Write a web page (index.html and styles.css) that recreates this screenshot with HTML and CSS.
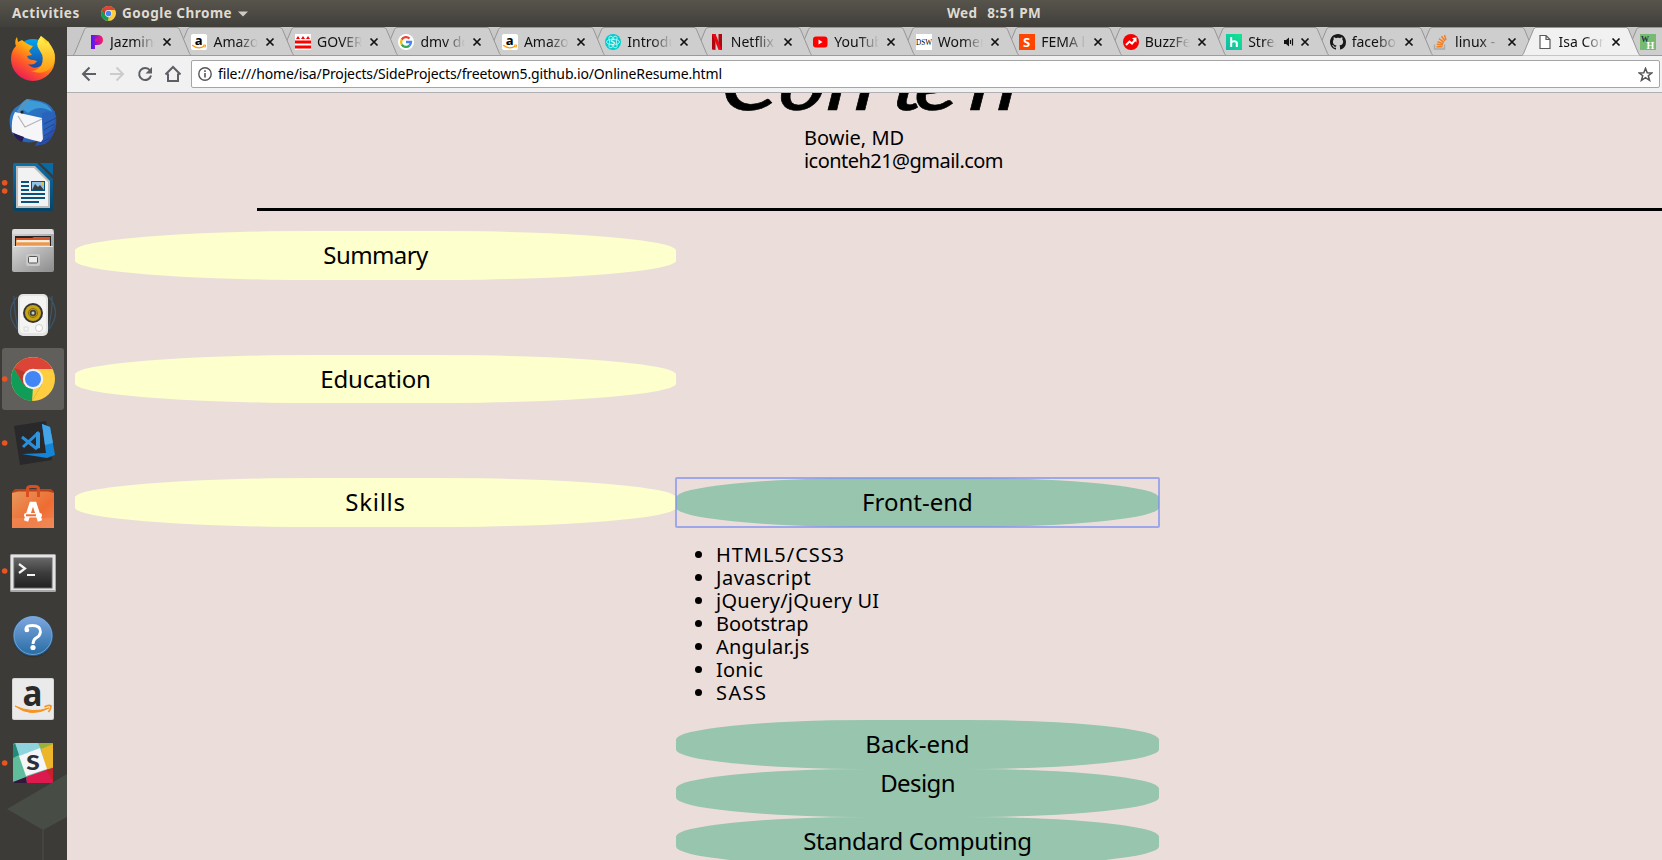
FILE: index.html
```html
<!DOCTYPE html>
<html lang="en">
<head>
<meta charset="utf-8">
<title>Isa Conteh</title>
<link rel="stylesheet" href="styles.css">
</head>
<body>
<svg class="defs" width="0" height="0" aria-hidden="true">
  <defs>
    <linearGradient id="ff" x1="0.8" y1="0" x2="0.2" y2="1"><stop offset="0" stop-color="#ffe226"/><stop offset=".35" stop-color="#ffb010"/><stop offset=".65" stop-color="#ff5a28"/><stop offset="1" stop-color="#e8135e"/></linearGradient>
    <linearGradient id="ffy" x1="0" y1="0" x2="0" y2="1"><stop offset="0" stop-color="#fff44f"/><stop offset="1" stop-color="#ff9810"/></linearGradient>
    <linearGradient id="ffb" x1="0" y1="0" x2="0" y2="1"><stop offset="0" stop-color="#00a5f0"/><stop offset="1" stop-color="#282a86"/></linearGradient>
    <linearGradient id="tb" x1="0" y1="0" x2="1" y2="1"><stop offset="0" stop-color="#2f7fc8"/><stop offset=".5" stop-color="#2a6fc0"/><stop offset="1" stop-color="#2b3fa0"/></linearGradient>
    <linearGradient id="metal" x1="0" y1="0" x2="1" y2="1"><stop offset="0" stop-color="#d5d5d5"/><stop offset="1" stop-color="#8e8e8e"/></linearGradient>
    <linearGradient id="wr" x1="0" y1="0" x2="0" y2="1"><stop offset="0" stop-color="#0a70ad"/><stop offset="1" stop-color="#064468"/></linearGradient>
    <linearGradient id="bag" x1="0" y1="0" x2="1" y2="1"><stop offset="0" stop-color="#e8985c"/><stop offset=".6" stop-color="#ee6c32"/><stop offset="1" stop-color="#f28552"/></linearGradient>
    <linearGradient id="term" x1="0" y1="0" x2="0" y2="1"><stop offset="0" stop-color="#666"/><stop offset=".5" stop-color="#3c3c3c"/><stop offset="1" stop-color="#222"/></linearGradient>
    <linearGradient id="help" x1="0" y1="0" x2="0" y2="1"><stop offset="0" stop-color="#7ea6de"/><stop offset="1" stop-color="#2a6da5"/></linearGradient>
    <linearGradient id="pan" x1="0" y1="0" x2="1" y2="0"><stop offset="0" stop-color="#3a20ff"/><stop offset=".5" stop-color="#b010c0"/><stop offset="1" stop-color="#ff2050"/></linearGradient>
    <linearGradient id="hulu" x1="0" y1="1" x2="1" y2="0"><stop offset="0" stop-color="#10b8a8"/><stop offset="1" stop-color="#10e890"/></linearGradient>
    <symbol id="chrome" viewBox="0 0 44 44">
      <circle cx="22" cy="22" r="22" fill="#ffcd40"/>
      <path d="M22 22 3 11A22 22 0 0 1 41.500 12L22 12Z" fill="#db4437"/>
      <path d="M3 11A22 22 0 0 0 21 44L31 27 22 22 13 27Z" fill="#0f9d58"/>
      <path d="M3 11 13 28 22 22 22 12Z" fill="#db4437"/><path d="M3 11 12.500 27 Q11 20 14 15Z" fill="#b83a2e"/>
      <path d="M21 44 31 27 22 30Z" fill="#ffcd40"/>
      <circle cx="22" cy="22" r="10.200" fill="#f1f1f1"/><circle cx="22" cy="22" r="8" fill="#4285f4"/>
    </symbol>
    <symbol id="amz" viewBox="0 0 16 16"><rect width="16" height="16" rx="2" fill="#fff"/><text x="3.700" y="10.500" class="amz-a">a</text><path d="M1.200 11.300Q7.500 16 13.500 12" fill="none" stroke="#f90" stroke-width="1.400"/><path d="M12 11.200 14.700 11 14 13.600" fill="none" stroke="#f90"/></symbol>
    <symbol id="shape" viewBox="0 0 118 29"><path d="M0 28.500 1.500 26.500 11.500 2.500Q12.300 .5 14 .5H104Q105.700 .5 106.500 2.500L116.500 26.500 118 28.500" stroke="#969696" stroke-width="1"/></symbol>
    <symbol id="x" viewBox="0 0 10 10"><path d="M1.500 1.500 8.500 8.500M8.500 1.500 1.500 8.500" stroke="currentColor" stroke-width="1.700"/></symbol>
  </defs>
</svg>

<div class="desktop">
  <header class="topbar">
    <span class="activities">Activities</span>
    <svg class="top-chrome" width="15" height="15"><use href="#chrome"/></svg>
    <span class="app-name">Google Chrome</span>
    <svg class="top-arrow" width="10" height="6"><path d="M0 .5H10L5 5.500Z" fill="#cfccc4"/></svg>
    <span class="clock"><span class="day">Wed</span><span class="time">8:51 PM</span></span>
  </header>

  <div class="workspace">
    <nav class="dock">
      <svg class="app" viewBox="0 0 66 64">
        <circle cx="33" cy="31" r="19" fill="url(#ffb)"/>
        <path d="M17 10 18 15 22 13Q28 18 33 19L29 24 32 28 27 29Q28 33 33 33L37 34Q34 39 28 37Q34 44 42 38Q46 31 42 24Q36 16 41 9Q55 18 55 32A22 22 0 0 1 11 32Q11 24 16 19Q14 14 17 10Z" fill="url(#ff)"/>
        <path d="M41 9Q34 17 40 24Q45 31 41 39Q37 44 31 44Q45 49 52 39Q58 27 51 20L48 14 46 17Z" fill="url(#ffy)"/>
      </svg>
      <svg class="app" viewBox="0 0 66 64">
        <path d="M22 12Q26 6 34 9Q52 10 56 25Q58 38 50 49L45 53 35 55 38 50Q20 55 12 42Q6 26 15 17Z" fill="url(#tb)"/>
        <path d="M20 16Q24 8 34 10Q48 11 53 22Q40 12 28 22Z" fill="#3d9bd8"/>
        <path d="M22 12 27 8 30 9Q24 13 21 24L17 20Z" fill="#5794bd"/>
        <path d="M15 21 42 27 43 48 41 51Q22 47 12 41Q11 28 15 21Z" fill="#f6f6f8"/><path d="M18 25 25 36 42 28" fill="none" stroke="#b4b4b8" stroke-width="1.200"/>
        <path d="M13 42 24 46 22 51Q15 48 13 42Z" fill="#261a58"/><path d="M42 22 55 20 54 33 48 43 43 48Z" fill="#2a63bb"/>
        <path d="M44 33 56 27M44 39 54 33M44 45 54 39M39 53 50 47" stroke="#24448f" stroke-width="1"/><circle cx="22" cy="21" r="1.600" fill="#222"/>
      </svg>
      <svg class="app" viewBox="0 0 66 64">
        <circle cx="4.700" cy="27.700" r="2.800" fill="#e95420"/><circle cx="4.700" cy="36" r="2.800" fill="#e95420"/>
        <path d="M15 8H37L53 24V54Q53 56 51 56H15Q13 56 13 54V10Q13 8 15 8Z" fill="url(#wr)"/><path d="M40 8H53V20Z" fill="#0a68a3"/>
        <path d="M16 11H35L50 26V53H16Z" fill="#bcbcbc"/><path d="M18 13H34L48 27V51H18Z" fill="#f2f2f2"/>
        <path d="M21 27H29M21 31H29M21 35H29M21 39H45M21 43H45M21 47H39" stroke="#0a527d" stroke-width="2"/>
        <rect x="31" y="26" width="14" height="10" fill="#0a527d"/><rect x="32" y="27" width="12" height="8" fill="#8fc4e8"/><path d="M32 35 35 29 38 32 40 30 44 35Z" fill="#3c3c3c"/><circle cx="42.500" cy="28.500" r="1.500" fill="#e8c040"/>
      </svg>
      <svg class="app" viewBox="0 0 66 64">
        <rect x="12" y="10" width="42" height="43" rx="2" fill="url(#metal)"/><path d="M14 10H52L54 15H12Z" fill="#dedede"/>
        <rect x="15" y="17" width="36" height="11" fill="#252525"/><path d="M16 19H32L34 18H50V27H16Z" fill="#d5542a"/><path d="M16 21H50V28H16Z" fill="#f0b070"/><path d="M17 22H49" stroke="#fff" stroke-width="1.500"/><path d="M16 25H50" stroke="#e08038"/>
        <rect x="13" y="27" width="40" height="25" rx="1" fill="url(#metal)"/><rect x="13" y="27" width="40" height="1" fill="#e8e8e8"/>
        <rect x="26" y="35" width="14" height="12" rx="2" fill="#c8c8c8"/><rect x="28.500" y="37.500" width="9" height="6.500" rx="1" fill="#ececec" stroke="#555"/>
      </svg>
      <svg class="app" viewBox="0 0 66 64">
        <g fill="none" stroke="#3e5569" stroke-width="1.300"><path d="M17 14Q4 29 17 46M14 13Q14 29 19 50M49 14Q62 29 49 46M52 13Q53 29 47 50"/></g>
        <rect x="18" y="11" width="30" height="42" rx="5" fill="#e4e4e2"/><rect x="20" y="13" width="26" height="37" rx="4" fill="#f4f4f2"/>
        <circle cx="33" cy="30" r="10" fill="#353535"/><circle cx="33" cy="30" r="8" fill="#c8a414"/><circle cx="33" cy="30" r="4.500" fill="none" stroke="#8a7008" stroke-width="1"/><circle cx="33" cy="30" r="3.300" fill="#444"/><circle cx="33" cy="30" r="1.500" fill="#ccc"/>
        <circle cx="39" cy="45" r="3.500" fill="#fff" stroke="#ccc"/><rect x="24" y="44" width="4" height="4" fill="none" stroke="#dcdcdc"/>
      </svg>
      <svg class="app" viewBox="0 0 66 64">
        <rect x="2" y="1" width="62" height="62" rx="3" fill="#605f5b"/><circle cx="4.700" cy="32" r="2.800" fill="#e95420"/>
        <use href="#chrome" x="11" y="10" width="44" height="44"/>
      </svg>
      <svg class="app" viewBox="0 0 66 64">
        <circle cx="4.700" cy="32" r="2.800" fill="#e95420"/>
        <path d="M14 15 46 10 52 49 20 54Z" fill="#29292b"/><path d="M42 13 50 16 55 44 47 47 22 43 46 42Z" fill="#1384d6"/><path d="M42 13 50 16 53 32 45 34Z" fill="#43a5e8"/>
        <path d="M22 26 37 38M39 21 23 36" fill="none" stroke="#2b8fd8" stroke-width="3"/><path d="M36 21 40 22V37L36 38Z" fill="#3095df"/>
      </svg>
      <svg class="app" viewBox="0 0 66 64">
        <path d="M12 17 15 14H51L54 17V21H12Z" fill="#b8431a"/><path d="M12 18 18 16.500H48L54 18V53H12Z" fill="url(#bag)"/><path d="M12 43H54V53H12Z" fill="#f18a58" opacity=".6"/>
        <path d="M27.500 22V14Q27.500 11.500 31 11.500H35Q38.500 11.500 38.500 14V22" fill="none" stroke="#d94f22" stroke-width="3"/>
        <path d="M26 46 31.500 29H34.500L40 46" fill="none" stroke="#fff" stroke-width="4.500"/><rect x="24" y="38" width="18" height="4.500" rx="2" fill="#fff"/><rect x="26" y="39.300" width="10" height="2" fill="#ee6c32"/>
      </svg>
      <svg class="app" viewBox="0 0 66 64">
        <circle cx="4.700" cy="32" r="2.800" fill="#e95420"/>
        <rect x="10" y="15" width="46" height="38" rx="1.500" fill="#a8a8a8"/><rect x="11" y="16" width="44" height="35" fill="#e4e4e4"/><rect x="13.500" y="18.500" width="39" height="31" fill="#686868"/><rect x="14.500" y="19.500" width="37" height="29" fill="url(#term)"/>
        <path d="M19 25 25 29.500 19 34M27 36H35" fill="none" stroke="#f4f4f4" stroke-width="2.200"/>
      </svg>
      <svg class="app" viewBox="0 0 66 64">
        <circle cx="33" cy="35" r="19.500" fill="#33322e"/><circle cx="33" cy="33" r="20" fill="#265f92"/><circle cx="33" cy="32.500" r="19" fill="url(#help)" stroke="#7fb0e0" stroke-width=".8"/>
        <path d="M26.500 28.500Q24 22.500 32.500 22.500Q40.500 22.500 40.500 29Q40 33 36 35Q33 37 33 41" fill="none" stroke="#fff" stroke-width="2.800"/><circle cx="27" cy="27" r="2.300" fill="#fff"/><circle cx="33" cy="44.500" r="2.600" fill="#fff"/>
      </svg>
      <svg class="app" viewBox="0 0 66 64">
        <rect x="12" y="11" width="42" height="42" rx="2" fill="#d5d5d5"/><rect x="13" y="12" width="40" height="40" rx="1" fill="#eaeaea"/>
        <text x="22.500" y="39" class="dock-a" textLength="20" lengthAdjust="spacingAndGlyphs">a</text><path d="M15 39Q31 51 49 41Q32 47 15 39Z" fill="#f7931e" stroke="#f7931e"/><path d="M44.500 40Q49 37.500 51 39Q51 42 48.500 45" fill="none" stroke="#f7931e" stroke-width="1.800"/>
      </svg>
      <svg class="app" viewBox="0 0 66 64">
        <circle cx="4.700" cy="32" r="2.800" fill="#e95420"/>
        <rect x="13" y="12" width="40" height="40" rx="2" fill="#5fbd9b"/><path d="M15 12H39L41 18 19 25Z" fill="#8fd3dd"/><path d="M13 14 15 12 19 24 13 27Z" fill="#228b78"/><path d="M38 12H53V14L41 18Z" fill="#98b03c"/><path d="M41 18 53 13V36L46 39Z" fill="#ecb52a"/><path d="M26 46 46 39 53 37V52H27Z" fill="#dc1a4e"/><path d="M46 39 53 37V50Z" fill="#c8202a"/><path d="M13 51 26 46 27 52H14Z" fill="#35153a"/><path d="M19 25 40 17 47 38 26 45Z" fill="#f4f6f9"/>
        <text x="26" y="38.500" class="dock-s" textLength="14" lengthAdjust="spacingAndGlyphs">s</text>
      </svg>
      <svg class="dock-tail" viewBox="0 0 67 86" width="67" height="86"><path d="M7 35 67 0V43L43 56Z" fill="#474c44"/><path d="M43 56V86" stroke="#43463f" stroke-width="2"/></svg>
    </nav>

    <main class="browser">
      <div class="tabs">
        <div class="tab"><svg class="shape"><use href="#shape"/></svg><svg class="fav" viewBox="0 0 16 16"><path d="M3 1H9Q15 1 15 6Q15 11 9 11H7V15H3Z" fill="url(#pan)"/><path d="M7 5 10 4V7L7 8Z" fill="#e01878"/></svg><span class="label">Jazmine</span><svg class="close"><use href="#x"/></svg></div>
        <div class="tab"><svg class="shape"><use href="#shape"/></svg><svg class="fav"><use href="#amz"/></svg><span class="label">Amazon</span><svg class="close"><use href="#x"/></svg></div>
        <div class="tab"><svg class="shape"><use href="#shape"/></svg><svg class="fav" viewBox="0 0 16 16"><rect width="16" height="16" fill="#fff"/><path d="M0 6.500H16V9.500H0ZM0 11.500H16V14.500H0Z" fill="#f00"/><path d="M1 5 3 2 5 5ZM6 5 8 2 10 5ZM11 5 13 2 15 5Z" fill="#f00"/></svg><span class="label">GOVERN</span><svg class="close"><use href="#x"/></svg></div>
        <div class="tab"><svg class="shape"><use href="#shape"/></svg><svg class="fav" viewBox="0 0 16 16"><circle cx="8" cy="8" r="8" fill="#fff"/><g fill="none" stroke-width="2.300"><path d="M11.500 4.500A5 5 0 0 0 3.700 5.600" stroke="#ea4335"/><path d="M3.700 5.600A5 5 0 0 0 3.800 10.600" stroke="#fbbc05"/><path d="M3.800 10.600A5 5 0 0 0 11.400 11.600" stroke="#34a853"/><path d="M8 8H13Q13 10 11.400 11.600" stroke="#4285f4"/></g></svg><span class="label">dmv do</span><svg class="close"><use href="#x"/></svg></div>
        <div class="tab"><svg class="shape"><use href="#shape"/></svg><svg class="fav"><use href="#amz"/></svg><span class="label">Amazon</span><svg class="close"><use href="#x"/></svg></div>
        <div class="tab"><svg class="shape"><use href="#shape"/></svg><svg class="fav" viewBox="0 0 16 16"><circle cx="8" cy="8" r="8" fill="#0cc"/><g fill="none" stroke="#b8ffff" stroke-width=".8"><ellipse cx="8" cy="8" rx="6.500" ry="2.800"/><ellipse cx="8" cy="8" rx="6.500" ry="2.800" transform="rotate(60 8 8)"/><ellipse cx="8" cy="8" rx="6.500" ry="2.800" transform="rotate(120 8 8)"/></g><circle cx="8" cy="8" r="3" fill="#0cc"/><text x="5.600" y="11" class="fav-s">S</text></svg><span class="label">Introdu</span><svg class="close"><use href="#x"/></svg></div>
        <div class="tab"><svg class="shape"><use href="#shape"/></svg><svg class="fav" viewBox="0 0 16 16"><path d="M3 0H6.500V16L3 15.500ZM9.500 0H13V16L9.500 15.500Z" fill="#b1060f"/><path d="M3 0H6.500L13 16 9.500 15.500Z" fill="#e50914"/></svg><span class="label">Netflix</span><svg class="close"><use href="#x"/></svg></div>
        <div class="tab"><svg class="shape"><use href="#shape"/></svg><svg class="fav" viewBox="0 0 16 16"><rect x="1" y="2.500" width="14.500" height="11" rx="3" fill="#f00"/><path d="M6.500 5.500V10.500L10.500 8Z" fill="#fff"/></svg><span class="label">YouTube</span><svg class="close"><use href="#x"/></svg></div>
        <div class="tab"><svg class="shape"><use href="#shape"/></svg><svg class="fav" viewBox="0 0 16 16"><rect width="16" height="16" fill="#fff"/><text x="0" y="10.500" class="fav-dsw" textLength="16" lengthAdjust="spacingAndGlyphs">DSW</text></svg><span class="label">Women</span><svg class="close"><use href="#x"/></svg></div>
        <div class="tab"><svg class="shape"><use href="#shape"/></svg><svg class="fav" viewBox="0 0 16 16"><rect width="16" height="16" fill="#ff4500"/><text x="4" y="13" class="fav-b">S</text></svg><span class="label">FEMA l</span><svg class="close"><use href="#x"/></svg></div>
        <div class="tab"><svg class="shape"><use href="#shape"/></svg><svg class="fav" viewBox="0 0 16 16"><circle cx="8" cy="8" r="8" fill="#f40000"/><path d="M3 11 6.500 7.500 9 9.500 12 6" fill="none" stroke="#fff" stroke-width="2"/><path d="M9 4 13.500 3.500V8.500Z" fill="#fff"/></svg><span class="label">BuzzFe</span><svg class="close"><use href="#x"/></svg></div>
        <div class="tab"><svg class="shape"><use href="#shape"/></svg><svg class="fav" viewBox="0 0 16 16"><rect width="16" height="16" fill="url(#hulu)"/><path d="M5.200 3V13M5.200 8.500Q5.500 7.300 8 7.300Q10.800 7.300 10.800 9V13" fill="none" stroke="#fff" stroke-width="2"/></svg><span class="label short">Strea</span><svg class="sound" viewBox="0 0 10 10"><path d="M0 3H2L5 .5V9.500L2 7H0Z" fill="#111"/><path d="M6.500 3V7M8.500 1.500V8.500" stroke="#111" stroke-width="1.200"/></svg><svg class="close"><use href="#x"/></svg></div>
        <div class="tab"><svg class="shape"><use href="#shape"/></svg><svg class="fav" viewBox="0 0 16 16"><path d="M8 0C3.580 0 0 3.580 0 8c0 3.540 2.290 6.530 5.470 7.590.4.070.55-.17.55-.38 0-.19-.01-.82-.01-1.490-2.010.37-2.530-.49-2.690-.94-.09-.23-.48-.94-.82-1.130-.28-.15-.68-.52-.01-.53.63-.01 1.080.58 1.230.82.72 1.210 1.870.87 2.330.66.07-.52.28-.87.51-1.070-1.780-.2-3.640-.89-3.640-3.950 0-.87.31-1.590.82-2.150-.08-.2-.36-1.020.08-2.120 0 0 .67-.21 2.200.82.64-.18 1.320-.27 2-.27s1.360.09 2 .27c1.530-1.040 2.200-.82 2.200-.82.44 1.100.16 1.920.08 2.120.51.56.82 1.270.82 2.150 0 3.070-1.870 3.750-3.650 3.950.29.25.54.73.54 1.480 0 1.070-.01 1.930-.01 2.200 0 .21.15.46.55.38A8.010 8.010 0 0 0 16 8c0-4.420-3.580-8-8-8z" fill="#191717"/></svg><span class="label">facebook</span><svg class="close"><use href="#x"/></svg></div>
        <div class="tab"><svg class="shape"><use href="#shape"/></svg><svg class="fav" viewBox="0 0 16 16"><path d="M1.500 10.500V15H11.500V10.500" fill="none" stroke="#aaa" stroke-width="1.300"/><path d="M3.500 12.700H9.500M3.700 10.300 9.800 11M4.500 7.800 10.300 9.700M6 4.700 11 8.300M8.500 2.200 12 7M11.500 1 13 6" stroke="#f48024" stroke-width="1.500"/></svg><span class="label">linux - l</span><svg class="close"><use href="#x"/></svg></div>
        <div class="tab active"><svg class="shape"><use href="#shape"/></svg><svg class="fav" viewBox="0 0 16 16"><path d="M3 1.500H9L13 5.500V14.500H3ZM9 1.500V5.500H13" fill="#fff" stroke="#5a5a5a" stroke-width="1.200"/></svg><span class="label">Isa Conteh</span><svg class="close"><use href="#x"/></svg></div>
        <div class="tab"><svg class="shape"><use href="#shape"/></svg><svg class="fav" viewBox="0 0 16 16"><rect width="16" height="16" fill="#77bb72"/><text x="1" y="7.500" class="fav-w">W</text><text x="6.500" y="14.500" class="fav-h">H</text></svg></div>
      </div>

      <div class="toolbar">
        <svg class="nav" viewBox="0 0 16 16"><path d="M15 8H2.500M8.500 1.500 2 8 8.500 14.500" fill="none" stroke="#5c5f64" stroke-width="2"/></svg>
        <svg class="nav" viewBox="0 0 16 16"><path d="M1 8H13.500M7.500 1.500 14 8 7.500 14.500" fill="none" stroke="#ccc" stroke-width="2"/></svg>
        <svg class="nav" viewBox="0 0 16 16"><path d="M13 4.500A6 6 0 1 0 14 9.500" fill="none" stroke="#5c5f64" stroke-width="2"/><path d="M15 1V7.500H8.500Z" fill="#5c5f64"/></svg>
        <svg class="nav home" viewBox="0 0 18 18"><path d="M1.500 9.500 9 2 16.500 9.500M4 8.500V16H14V8.500" fill="none" stroke="#5c5f64" stroke-width="2"/></svg>
        <div class="omnibox">
          <svg class="info" viewBox="0 0 14 14"><circle cx="7" cy="7" r="6.200" fill="none" stroke="#555" stroke-width="1.400"/><path d="M7 6V10.500M7 3.300V4.900" stroke="#555" stroke-width="1.600"/></svg>
          <span class="url">file:///home/isa/Projects/SideProjects/freetown5.github.io/OnlineResume.html</span>
          <svg class="bookmark" viewBox="0 0 14 14"><path d="M7 1.300 8.600 5.300 13 5.500 9.600 8.200 10.800 12.500 7 10 3.200 12.500 4.400 8.200 1 5.500 5.400 5.300Z" fill="none" stroke="#555" stroke-width="1.400"/></svg>
        </div>
      </div>

      <div class="page">
        <svg class="name" width="320" height="22"><text class="name-text" transform="translate(0 16.500) skewX(-6) scale(1.250 1)" x="1 47.500 86 138 156 200">Conteh</text></svg>
        <address class="contact"><span>Bowie, MD</span><span class="email">iconteh21@gmail.com</span></address>
        <hr class="rule">
        <section class="resume">
          <h2 class="pill tight">Summary</h2>
          <h2 class="pill snug">Education</h2>
          <div class="skills">
            <h2 class="pill loose">Skills</h2>
            <div class="groups">
              <h3 class="pill green focus">Front-end</h3>
              <ul class="list">
                <li class="caps">HTML5/CSS3</li><li class="wide">Javascript</li><li>jQuery/jQuery UI</li><li class="even">Bootstrap</li><li>Angular.js</li><li>Ionic</li><li class="widest">SASS</li>
              </ul>
              <h3 class="pill green">Back-end</h3>
              <h3 class="pill green raised tight">Design</h3>
              <h3 class="pill green medium">Standard Computing</h3>
            </div>
          </div>
        </section>
      </div>
    </main>
  </div>
</div>
</body>
</html>
```
FILE: styles.css
```css
* { box-sizing: border-box; }
body { margin: 0; overflow: hidden; font-family: "Noto Sans", "Open Sans", sans-serif; color: #000; }
svg { display: block; flex: none; }
.defs { position: absolute; }
.desktop { display: flex; flex-direction: column; width: 1662px; height: 860px; overflow: hidden; }

.topbar { display: flex; align-items: center; height: 27px; flex: none; padding-left: 12px; background: linear-gradient(#57544c, #403f3a); color: #dfdbd2; font-size: 13.5px; font-weight: 700; letter-spacing: .5px; line-height: 27px; white-space: nowrap; }
.activities { width: 89px; }
.top-chrome { margin-right: 6px; }
.app-name { width: 116px; }
.clock { display: flex; gap: 10px; margin-left: 699px; letter-spacing: .3px; }

.workspace { display: flex; flex: 1; min-height: 0; }
.dock { width: 67px; flex: none; background: #3c3b37; overflow: hidden; }
.app { width: 66px; height: 64px; }
.dock-tail { margin-top: -21px; }
.dock-a { font: 700 35px "Open Sans", sans-serif; fill: #2a2a2a; }
.dock-s { font: 700 28px "Lato", sans-serif; fill: #2b303a; }

.browser { display: flex; flex-direction: column; flex: 1; min-width: 0; background: #f1f1f1; }
.tabs { display: flex; height: 29px; flex: none; padding-left: 6px; overflow: hidden; background: #c9c9c9; box-shadow: inset 0 -1px #9b9b9b; }
.tab { position: relative; display: flex; align-items: center; flex: none; width: 103.47px; height: 29px; padding-left: 15px; color: #111; }
/* Each background tab covers the left edge of the one after it. */
.tab:nth-child(1) { z-index: 16; }
.tab:nth-child(2) { z-index: 15; }
.tab:nth-child(3) { z-index: 14; }
.tab:nth-child(4) { z-index: 13; }
.tab:nth-child(5) { z-index: 12; }
.tab:nth-child(6) { z-index: 11; }
.tab:nth-child(7) { z-index: 10; }
.tab:nth-child(8) { z-index: 9; }
.tab:nth-child(9) { z-index: 8; }
.tab:nth-child(10) { z-index: 7; }
.tab:nth-child(11) { z-index: 6; }
.tab:nth-child(12) { z-index: 5; }
.tab:nth-child(13) { z-index: 4; }
.tab:nth-child(14) { z-index: 3; }
.tab.active { z-index: 30; }
.shape { position: absolute; left: 0; top: 0; width: 118px; height: 29px; fill: #cecece; }
.tab:not(.active)::after { content: ""; position: absolute; left: 0; bottom: 0; width: 118px; height: 1px; background: #9b9b9b; }
.active .shape { fill: #f1f1f1; }
.fav { position: relative; width: 16px; height: 16px; margin-right: 6px; z-index: 1; }
.label { position: relative; width: 45px; overflow: hidden; white-space: nowrap; font-size: 14px; line-height: 28px; -webkit-mask-image: linear-gradient(90deg, #000 55%, transparent); mask-image: linear-gradient(90deg, #000 55%, transparent); }
.label.short { width: 28px; margin-right: 8px; }
.sound { position: relative; width: 10px; height: 10px; margin-right: -1px; }
.close { position: relative; width: 10px; height: 10px; margin-left: 7px; }
.amz-a { font: 700 13px "Open Sans", sans-serif; }
.fav-s { font: 700 8px "Lato", sans-serif; fill: #fff; }
.fav-b { font: 700 13px "Open Sans", sans-serif; fill: #fff; }
.fav-dsw { font: 8px "Liberation Serif", serif; }
.fav-w { font: 700 8px "Liberation Serif", serif; fill: #234; }
.fav-h { font: 700 10px "Liberation Serif", serif; fill: #fff; }

.toolbar { display: flex; align-items: center; height: 37px; flex: none; padding: 0 2px 0 14px; gap: 12px; border-bottom: 1px solid #b0b0b4; }
.nav { width: 16px; height: 16px; }
.home { width: 18px; height: 18px; margin-left: -1px; }
.omnibox { display: flex; align-items: center; flex: 1; height: 28px; margin-left: -3px; padding: 0 6px; border: 1px solid #a5a5a5; border-radius: 2px; background: #fff; }
.info { width: 14px; height: 14px; margin-right: 6px; }
.url { flex: 1; font-size: 14px; letter-spacing: -.14px; line-height: 26px; white-space: nowrap; }
.bookmark { width: 15px; height: 15px; }

.page { flex: 1; min-height: 0; overflow: hidden; background: #ebdeda; }
.name { margin-left: 651px; overflow: hidden; }
.name-text { font: italic 500 72px "Lato", sans-serif; stroke: #000; stroke-width: .6; }
.contact { display: flex; flex-direction: column; margin: 11px 0 0 737px; font-size: 20px; font-style: normal; line-height: 23px; }
.email { letter-spacing: -.54px; }
.rule { height: 3px; margin: 36px 0 0 190px; border: 0; background: #000; }
.resume { display: flex; flex-direction: column; gap: 75px; margin: 20px 0 0 8px; }
.pill { display: block; width: 601px; height: 48.67px; margin: 0; border-radius: 40%; background: #fdffcd; font-size: 24px; font-weight: 400; line-height: 47px; text-align: center; }
.tight { letter-spacing: -.6px; }
.snug { letter-spacing: -.18px; }
.medium { letter-spacing: -.36px; }
.loose { letter-spacing: .7px; }
.skills { display: flex; }
.groups { width: 483px; }
.green { width: 483px; background: #97c5ad; }
.raised { line-height: 28px; }
.focus { position: relative; }
.focus::after { content: ""; position: absolute; inset: -1px; border: 2px solid #7b8ef0b0; border-radius: 2px; }
.list { margin: 16px 0; padding-left: 40px; font-size: 20px; letter-spacing: .22px; line-height: 23px; }
.caps { letter-spacing: .95px; }
.wide { letter-spacing: .5px; }
.widest { letter-spacing: 1.4px; }
.even { letter-spacing: 0; }
```
